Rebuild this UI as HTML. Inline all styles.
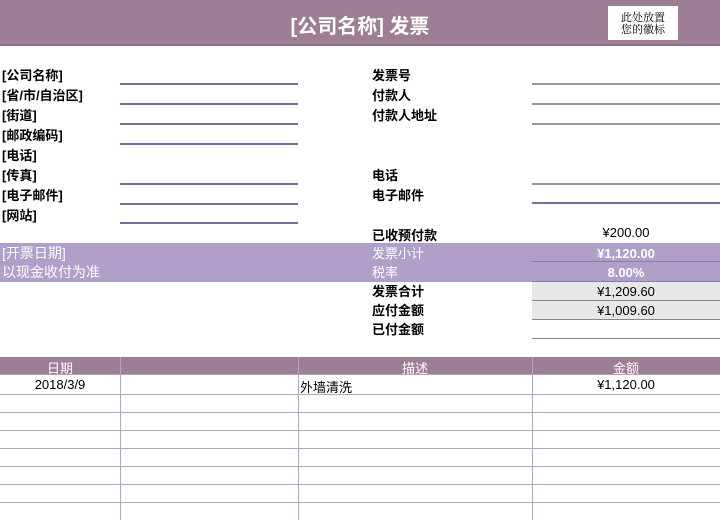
<!DOCTYPE html>
<html><head><meta charset="utf-8"><style>
*{margin:0;padding:0;box-sizing:border-box}
body{width:720px;height:520px;position:relative;background:#fff;font-family:"Liberation Sans","Noto Sans CJK SC",sans-serif;font-size:13px;color:#000;overflow:hidden}
.a{position:absolute;white-space:nowrap}
.b{font-weight:bold}
.hl{position:absolute;height:2px}
.p{background:#7d6b9e}
.g{background:#9a9a9a}
.w{color:#fff}
</style></head><body>
<div class="a" style="left:0;top:0;width:720px;height:46px;background:#9e7e94;border-bottom:2px solid #8a6f92"></div>
<div class="a b w" style="left:0;width:720px;top:10px;text-align:center;font-size:20px">[公司名称] 发票</div>
<div class="a" style="left:608px;top:6px;width:70px;height:34px;background:#fff;font-size:11px;line-height:12px;text-align:center;padding-top:5px;font-family:'Noto Serif CJK SC',serif">此处放置<br>您的徽标</div>

<div class="a b" style="left:2px;top:66px;line-height:20px">[公司名称]<br>[省/市/自治区]<br>[街道]<br>[邮政编码]<br>[电话]<br>[传真]<br>[电子邮件]<br>[网站]</div>
<div class="hl p" style="left:120px;width:178px;top:83px"></div>
<div class="hl p" style="left:120px;width:178px;top:103px"></div>
<div class="hl p" style="left:120px;width:178px;top:123px"></div>
<div class="hl p" style="left:120px;width:178px;top:143px"></div>
<div class="hl p" style="left:120px;width:178px;top:183px"></div>
<div class="hl p" style="left:120px;width:178px;top:203px"></div>
<div class="hl p" style="left:120px;width:178px;top:222px"></div>

<div class="a b" style="left:372px;top:66px;line-height:20px">发票号<br>付款人<br>付款人地址</div>
<div class="a b" style="left:372px;top:166px;line-height:20px">电话<br>电子邮件</div>
<div class="hl g" style="left:532px;width:188px;top:83px"></div>
<div class="hl g" style="left:532px;width:188px;top:103px"></div>
<div class="hl g" style="left:532px;width:188px;top:123px"></div>
<div class="hl g" style="left:532px;width:188px;top:183px"></div>
<div class="hl p" style="left:532px;width:188px;top:202px"></div>

<div class="a b" style="left:372px;top:225px">已收预付款</div>
<div class="a" style="left:532px;width:188px;text-align:center;top:225px">¥200.00</div>

<div class="a" style="left:0;top:243px;width:720px;height:39px;background:#b09fc9"></div>
<div class="a" style="left:532px;top:261px;width:188px;height:1px;background:#8a7aa8"></div>
<div class="a" style="left:532px;top:281px;width:188px;height:1px;background:#8a7aa8"></div>
<div class="a w" style="left:2px;top:244px;line-height:19px;font-size:14px">[开票日期]<br>以现金收付为准</div>
<div class="a w" style="left:372px;top:244px;line-height:19px">发票小计<br>税率</div>
<div class="a b w" style="left:532px;width:188px;text-align:center;top:244px;line-height:19px">¥1,120.00<br>8.00%</div>

<div class="a" style="left:532px;top:282px;width:188px;height:37px;background:#e8e8e8"></div>
<div class="a" style="left:532px;top:300px;width:188px;height:1px;background:#888"></div>
<div class="a" style="left:532px;top:319px;width:188px;height:1px;background:#888"></div>
<div class="a" style="left:532px;top:338px;width:188px;height:1px;background:#888"></div>
<div class="a b" style="left:372px;top:282px;line-height:19px">发票合计<br>应付金额<br>已付金额</div>
<div class="a" style="left:532px;width:188px;text-align:center;top:282px;line-height:19px">¥1,209.60<br>¥1,009.60</div>

<div class="a" style="left:0;top:357px;width:720px;height:18px;background:#9e7e94;border-bottom:1px solid #b09fc9"></div>
<div class="a w" style="left:0;width:120px;text-align:center;top:358px">日期</div>
<div class="a w" style="left:298px;width:234px;text-align:center;top:358px">描述</div>
<div class="a w" style="left:532px;width:188px;text-align:center;top:358px">金额</div>
<div class="a" style="left:0;width:120px;text-align:center;top:377px">2018/3/9</div>
<div class="a" style="left:300px;top:377px">外墙清洗</div>
<div class="a" style="left:532px;width:188px;text-align:center;top:377px">¥1,120.00</div>
<div class="a" style="left:0;top:394px;width:720px;height:1px;background:#b3a6c4"></div>
<div class="a" style="left:0;top:412px;width:720px;height:1px;background:#b3a6c4"></div>
<div class="a" style="left:0;top:430px;width:720px;height:1px;background:#b3a6c4"></div>
<div class="a" style="left:0;top:448px;width:720px;height:1px;background:#b3a6c4"></div>
<div class="a" style="left:0;top:466px;width:720px;height:1px;background:#b3a6c4"></div>
<div class="a" style="left:0;top:484px;width:720px;height:1px;background:#b3a6c4"></div>
<div class="a" style="left:0;top:502px;width:720px;height:1px;background:#b3a6c4"></div>
<div class="a" style="left:120px;top:357px;width:1px;height:163px;background:#b3a6c4"></div>
<div class="a" style="left:298px;top:357px;width:1px;height:163px;background:#b3a6c4"></div>
<div class="a" style="left:532px;top:357px;width:1px;height:163px;background:#b3a6c4"></div>
</body></html>
